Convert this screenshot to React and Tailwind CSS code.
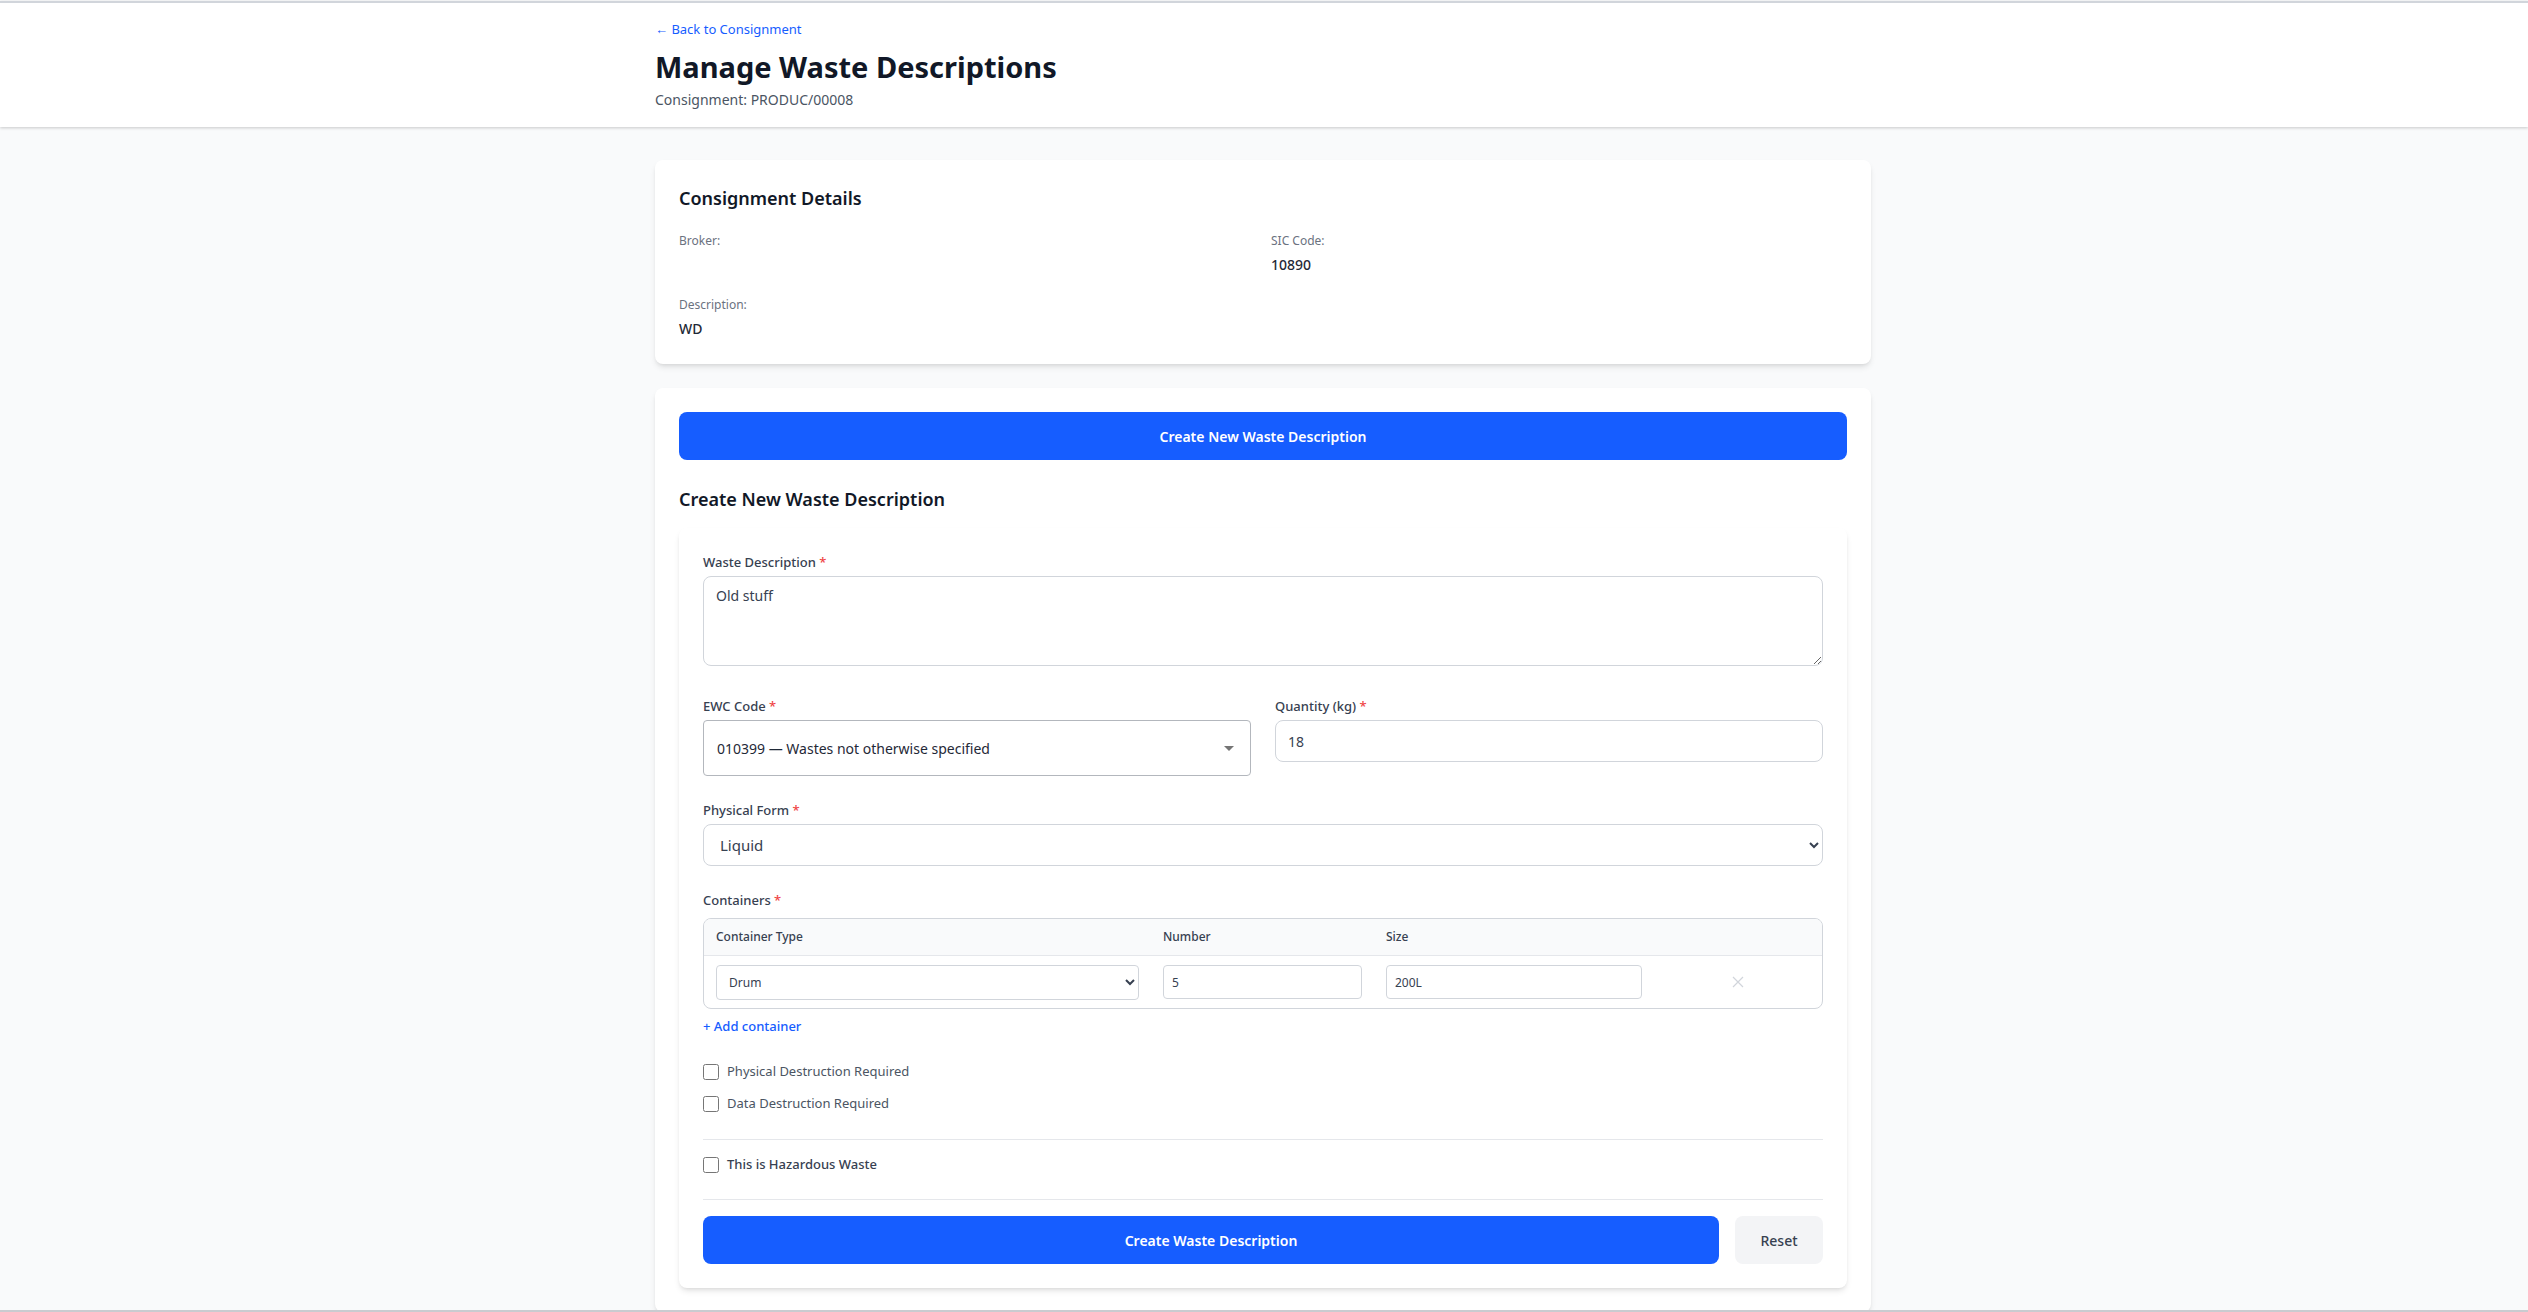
const labelCls = "block text-[13px] leading-5 font-medium text-[#374151]";
const fieldCls = "w-full bg-white border border-[#d1d5db] rounded-lg text-[14px] text-[#374151] outline-none";

function Label({ children }) {
  return (
    <label className={labelCls}>
      {children} <span className="text-[#ef4444]">*</span>
    </label>
  );
}

function Check({ label, strong }) {
  return (
    <label className={"flex items-center gap-2 h-5 text-[13px] " + (strong ? "font-medium text-[#374151]" : "text-[#4b5563]")}>
      <input type="checkbox" className="w-4 h-4 m-0" />
      <span>{label}</span>
    </label>
  );
}

export default function App() {
  return (
    <div className="h-[1312px] overflow-hidden bg-[#f9fafb] flex flex-col border-b-2 border-[#c9cbd0] font-['Noto_Sans',sans-serif]">
      <header className="bg-white border-t-2 border-[#d1d5db] mt-px pr-[2px] shadow-[0_1px_3px_rgba(0,0,0,0.2)] shrink-0">
        <div className="max-w-[1280px] mx-auto px-8 pt-4 pb-[17px]">
          <a className="block text-[13px] leading-5 text-[#165dff]">← Back to Consignment</a>
          <h1 className="mt-[10px] text-[29px] leading-9 font-bold text-[#111827]">Manage Waste Descriptions</h1>
          <p className="mt-[5px] text-[14px] leading-5 text-[#4b5563]">Consignment: PRODUC/00008</p>
        </div>
      </header>
      <main className="pr-[2px]">
        <div className="max-w-[1280px] w-full mx-auto px-8 pt-[33px]">
        <section className="bg-white rounded-lg shadow-md px-6 pt-6 pb-[25px]">
          <h2 className="text-[18px] leading-7 font-semibold text-[#111827]">Consignment Details</h2>
          <div className="mt-[19px] grid grid-cols-2 gap-x-4 gap-y-5">
            <div>
              <div className="text-[12px] leading-5 text-[#6b7280]">Broker:</div>
            </div>
            <div>
              <div className="text-[12px] leading-5 text-[#6b7280]">SIC Code:</div>
              <div className="mt-1 text-[14px] leading-5 font-medium text-[#1f2937]">10890</div>
            </div>
            <div>
              <div className="text-[12px] leading-5 text-[#6b7280]">Description:</div>
              <div className="mt-1 text-[14px] leading-5 font-medium text-[#1f2937]">WD</div>
            </div>
          </div>
        </section>

        <section className="mt-6 bg-white rounded-lg shadow-md p-6">
          <button className="w-full h-12 rounded-lg bg-[#165dff] text-white text-[14px] font-semibold">Create New Waste Description</button>
          <h2 className="mt-[25px] text-[18px] leading-7 font-semibold text-[#111827]">Create New Waste Description</h2>
          <div className="mt-[15px] bg-white rounded-lg shadow-md p-6">
            <Label>Waste Description</Label>
            <textarea defaultValue="Old stuff" className={fieldCls + " block mt-1 h-[90px] px-3 py-2"} />

            <div className="mt-[30px] grid grid-cols-2 gap-6 items-start">
              <div>
                <Label>EWC Code</Label>
                <div className="mt-1 h-14 border border-[#b3b7bd] rounded flex items-center justify-between pl-[13px] pr-[16px] text-[14px] text-[#1f2937]">
                  <span>010399 — Wastes not otherwise specified</span>
                  <span className="w-0 h-0 border-x-[5px] border-x-transparent border-t-[5px] border-t-[#757575]" />
                </div>
              </div>
              <div>
                <Label>Quantity (kg)</Label>
                <input defaultValue="18" className={fieldCls + " block mt-1 h-[42px] px-3"} />
              </div>
            </div>

            <div className="mt-6">
              <Label>Physical Form</Label>
              <select className={fieldCls + " block mt-1 h-[42px] px-3 text-[15px]"} defaultValue="Liquid">
                <option>Liquid</option>
              </select>
            </div>

            <div className="mt-6">
              <Label>Containers</Label>
              <div className="mt-2 border border-[#d1d5db] rounded-lg overflow-hidden">
                <div className="grid grid-cols-[423px_199px_256px_1fr] gap-x-6 px-3 h-[37px] items-center bg-[#f9fafb] border-b border-[#e5e7eb] text-[12px] font-medium text-[#374151]">
                  <span>Container Type</span>
                  <span>Number</span>
                  <span>Size</span>
                </div>
                <div className="grid grid-cols-[423px_199px_256px_1fr] gap-x-6 px-3 h-[52px] items-center">
                  <select className="w-full h-[35px] bg-white border border-[#d1d5db] rounded text-[12px] px-2 text-[#374151]" defaultValue="Drum">
                    <option>Drum</option>
                  </select>
                  <input defaultValue="5" className="w-full h-[34px] border border-[#d1d5db] rounded text-[12px] px-2 text-[#374151]" />
                  <input defaultValue="200L" className="w-full h-[34px] border border-[#d1d5db] rounded text-[12px] px-2 text-[#374151]" />
                  <div className="flex justify-center">
                    <svg width="12" height="12" viewBox="0 0 12 12" fill="none" stroke="#d1d5db" strokeWidth="1.2">
                      <path d="M1 1 L11 11 M11 1 L1 11" />
                    </svg>
                  </div>
                </div>
              </div>
              <button className="block mt-2 h-5 text-[13px] font-medium text-[#165dff]">+ Add container</button>
            </div>

            <div className="mt-[25px] flex flex-col gap-3">
              <Check label="Physical Destruction Required" />
              <Check label="Data Destruction Required" />
            </div>

            <div className="mt-[25px] border-t border-[#e5e7eb] pt-[15px]">
              <Check label="This is Hazardous Waste" strong />
            </div>

            <div className="mt-6 border-t border-[#e5e7eb] pt-4 flex gap-4">
              <button className="flex-1 h-12 rounded-lg bg-[#165dff] text-white text-[14px] font-semibold">Create Waste Description</button>
              <button className="w-[88px] h-12 rounded-lg bg-[#f3f4f6] text-[#374151] text-[14px] font-medium">Reset</button>
            </div>
          </div>
        </section>
        </div>
      </main>
    </div>
  );
}
